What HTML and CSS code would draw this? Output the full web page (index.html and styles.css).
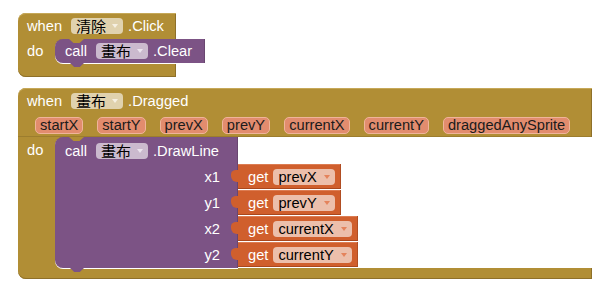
FILE: index.html
```html
<!DOCTYPE html>
<html>
<head>
<meta charset="utf-8">
<link rel="stylesheet" href="styles.css">
</head>
<body>
<div class="workspace">

  <div class="event ev-click">
    <div class="hdr h26">
      <span class="lbl">when</span>
      <span class="dd dd-gold"><span class="cjk">清除</span><i class="arr"></i></span>
      <span class="lbl dot">.Click</span>
    </div>
    <div class="stmt">
      <div class="do-col l24"><span class="lbl">do</span></div>
      <div class="call">
        <div class="call-body">
          <div class="call-head h24 pr13">
            <span class="lbl">call</span>
            <span class="dd dd-purple"><span class="cjk">畫布</span><i class="arr"></i></span>
            <span class="lbl dot">.Clear</span>
          </div>
        </div>
      </div>
    </div>
    <div class="foot"></div>
  </div>

  <div class="event ev-drag">
    <div class="hdr h25">
      <span class="lbl">when</span>
      <span class="dd dd-gold"><span class="cjk">畫布</span><i class="arr"></i></span>
      <span class="lbl dot">.Dragged</span>
    </div>
    <div class="params">
      <span class="param">startX</span>
      <span class="param">startY</span>
      <span class="param">prevX</span>
      <span class="param">prevY</span>
      <span class="param">currentX</span>
      <span class="param">currentY</span>
      <span class="param">draggedAnySprite</span>
    </div>
    <div class="stmt">
      <div class="do-col l27"><span class="lbl">do</span></div>
      <div class="call">
        <div class="call-body">
          <div class="call-head h27 pr19">
            <span class="lbl">call</span>
            <span class="dd dd-purple"><span class="cjk">畫布</span><i class="arr"></i></span>
            <span class="lbl dot">.DrawLine</span>
          </div>
          <div class="arg-row"><span class="lbl">x1</span></div>
          <div class="arg-row"><span class="lbl">y1</span></div>
          <div class="arg-row"><span class="lbl">x2</span></div>
          <div class="arg-row"><span class="lbl">y2</span></div>
        </div>
        <div class="sockets">
          <div class="get"><span class="lbl">get</span><span class="dd dd-orange">prevX<i class="arr"></i></span></div>
          <div class="get"><span class="lbl">get</span><span class="dd dd-orange">prevY<i class="arr"></i></span></div>
          <div class="get"><span class="lbl">get</span><span class="dd dd-orange">currentX<i class="arr"></i></span></div>
          <div class="get"><span class="lbl">get</span><span class="dd dd-orange">currentY<i class="arr"></i></span></div>
        </div>
      </div>
    </div>
    <div class="foot foot-drag"></div>
  </div>

</div>
</body>
</html>
```

FILE: styles.css
```css
html, body {
  margin: 0;
  padding: 0;
  background: #ffffff;
}

body {
  font-family: "Liberation Sans", "Noto Sans CJK TC", sans-serif;
  font-size: 14.67px;
}

.workspace {
  position: relative;
  width: 614px;
  height: 285px;
  overflow: hidden;
}

/* ---------- event (gold) blocks ---------- */
.event {
  position: absolute;
  display: flex;
  flex-direction: column;
}

.ev-click { left: 18px; top: 13px; }
.ev-drag  { left: 18px; top: 88px; }

.hdr {
  display: flex;
  align-items: center;
  background: #b18e35;
  padding: 0 12px 0 9px;
  border-top-left-radius: 8px;
  box-shadow: inset 0 1px 0 #c6a858, inset -1px 0 0 #8e7029;
}

.h24 { height: 24px; }
.h25 { height: 25px; }
.h26 { height: 26px; }
.h27 { height: 27px; }

.lbl {
  color: #ffffff;
  white-space: nowrap;
  line-height: 16px;
}

.hdr .lbl:first-child { margin-right: 9px; }
.dot { margin-left: 5px; }

/* dropdown fields */
.dd {
  display: inline-flex;
  align-items: center;
  height: 16px;
  border-radius: 4px;
  padding: 0 5px;
  color: #000;
  line-height: 16px;
  white-space: nowrap;
}

.cjk {
  font-family: "Noto Sans CJK TC", sans-serif;
  font-size: 15px;
  line-height: 16px;
}

.arr {
  display: inline-block;
  width: 0;
  height: 0;
  margin-left: 6px;
  border-left: 3.5px solid transparent;
  border-right: 3.5px solid transparent;
  border-top: 4px solid #fff;
}

.dd-gold { background: #e0d2ae; }
.dd-gold .arr { border-top-color: #f6f0e2; }

.dd-purple { background: #cbbace; }
.dd-purple .arr { border-top-color: #ece4ee; }

.dd-orange { background: #ecbfab; }
.dd-orange .arr { border-top-color: #e4835c; margin-left: 7px; }

/* parameter row */
.params {
  display: flex;
  align-items: center;
  gap: 14px;
  height: 24px;
  padding: 0 22px 0 17px;
  background: #b18e35;
  box-shadow: inset -1px 0 0 #8e7029, inset 0 -1px 0 #9c7d2e;
}

.param {
  display: inline-flex;
  align-items: center;
  height: 15px;
  padding: 0 4px;
  border: 1px solid #efb49a;
  border-radius: 5px;
  background: #e28c6e;
  color: #1b1b1b;
  line-height: 15px;
  white-space: nowrap;
}

/* statement area */
.stmt {
  display: flex;
  width: 0;
}

.do-col {
  flex: none;
  width: 47px;
  margin-right: -10px;
  padding-left: 9px;
  box-sizing: border-box;
  background: #b18e35;
}

.l24 .lbl { line-height: 24px; }
.l27 .lbl { line-height: 27px; }

.call {
  position: relative;
  z-index: 1;
  display: flex;
  flex: none;
}

.call-body {
  position: relative;
  display: flex;
  flex-direction: column;
  background: #7c5385;
  border-radius: 8px 0 0 8px;
  box-shadow: 0 1px 0 #ffffff, inset -1px 0 0 #694670;
}

/* notch from parent dipping into child top */
.call-body::before {
  content: "";
  position: absolute;
  left: 14px;
  top: 0;
  width: 15px;
  height: 4px;
  background: #b18e35;
  clip-path: polygon(0 0, 100% 0, 70% 100%, 30% 100%);
}

/* tab at child bottom */
.call-body::after {
  content: "";
  position: absolute;
  left: 15px;
  bottom: -4px;
  width: 14px;
  height: 4px;
  background: #7c5385;
  clip-path: polygon(0 0, 100% 0, 70% 100%, 30% 100%);
}

.call-head {
  display: flex;
  align-items: center;
  padding: 0 11px 0 10px;
}

.call-head .lbl:first-child { margin-right: 9px; }
.pr13 { padding-right: 13px; }
.pr19 { padding-right: 19px; }

.arg-row {
  display: flex;
  align-items: center;
  justify-content: flex-end;
  height: 26px;
  padding-right: 18px;
}

/* value sockets */
.sockets {
  display: flex;
  flex-direction: column;
  padding-top: 27px;
}

.get {
  position: relative;
  display: flex;
  align-items: center;
  align-self: flex-start;
  height: 25px;
  margin-bottom: 1px;
  padding: 0 6px 0 10px;
  background: #d05f2d;
  box-shadow: inset 0 -1px 0 #a9471d, inset -1px 0 0 #b04d22, inset 0 1px 0 #dc7c52;
}

.get .lbl { margin-right: 5px; }

.get::before {
  content: "";
  position: absolute;
  left: -7px;
  top: 6px;
  width: 7px;
  height: 12px;
  background: #d05f2d;
  border-radius: 5px 0 0 6px / 4px 0 0 6px;
}

.foot {
  height: 14px;
  background: #b18e35;
  border-bottom-left-radius: 8px;
  box-shadow: inset 0 -1px 0 #8e7029, inset -1px 0 0 #8e7029;
}

.foot-drag { height: 11px; }
```
